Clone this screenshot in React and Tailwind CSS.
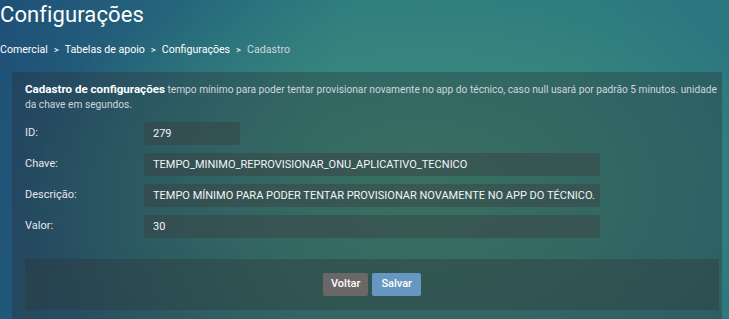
export default function App() {
  const fields = [
    { label: 'ID:', value: '279', w: 'w-[96px]' },
    { label: 'Chave:', value: 'TEMPO_MINIMO_REPROVISIONAR_ONU_APLICATIVO_TECNICO', w: 'w-[456px]' },
    { label: 'Descrição:', value: 'TEMPO MÍNIMO PARA PODER TENTAR PROVISIONAR NOVAMENTE NO APP DO TÉCNICO.', w: 'w-[456px]' },
    { label: 'Valor:', value: '30', w: 'w-[456px]' },
  ];

  return (
    <div className="h-[319px] w-[729px] overflow-hidden font-['Roboto',sans-serif] text-white bg-[radial-gradient(ellipse_55%_75%_at_58%_60%,#43937b_0%,rgba(60,140,120,0)_100%),linear-gradient(100deg,#1f5077_0%,#2b7a80_45%,#2b7a80_75%,#2a7580_100%)]">
      <h1 className="pt-[1px] text-[22px] leading-[28px] font-normal tracking-[0.1px]">Configurações</h1>

      <nav className="mt-[14px] flex items-center gap-[6px] text-[10.6px] leading-[14px]">
        <span>Comercial</span>
        <span className="text-[9.5px]">&gt;</span>
        <span>Tabelas de apoio</span>
        <span className="text-[9.5px]">&gt;</span>
        <span>Configurações</span>
        <span className="text-[9.5px]">&gt;</span>
        <span className="text-gray-300">Cadastro</span>
      </nav>

      <section className="ml-[12px] mr-[7px] mt-[15px] h-[260px] bg-[#2b2f33]/35 pl-[13px] pr-[3px] pt-[10px]">
        <p className="text-[10.2px] leading-[15px] text-gray-300 pr-[1px]">
          <b className="text-[11.6px] font-bold text-white">Cadastro de configurações</b> tempo mínimo para poder tentar provisionar novamente no app do técnico, caso null usará por padrão 5 minutos. unidade da chave em segundos.
        </p>

        <div className="mt-[10px] flex flex-col gap-[8px]">
          {fields.map((f) => (
            <div key={f.label} className="flex items-center">
              <label className="w-[119px] text-[11px] text-gray-200">{f.label}</label>
              <div className={`${f.w} h-[23px] rounded-[2px] bg-[#3a3f40]/45 px-[9px] text-[11px] leading-[23px] text-gray-100 whitespace-nowrap overflow-hidden`}>
                {f.value}
              </div>
            </div>
          ))}
        </div>

        <div className="mt-[21px] flex h-[51px] items-center justify-center gap-[4px] bg-[#2f3433]/35">
          <button className="h-[23px] rounded-[2px] bg-[#6a6867] px-[8px] text-[11px] font-medium text-white">Voltar</button>
          <button className="h-[23px] rounded-[2px] bg-[#6597c0] px-[9px] text-[11px] font-medium text-white">Salvar</button>
        </div>
      </section>
    </div>
  );
}
